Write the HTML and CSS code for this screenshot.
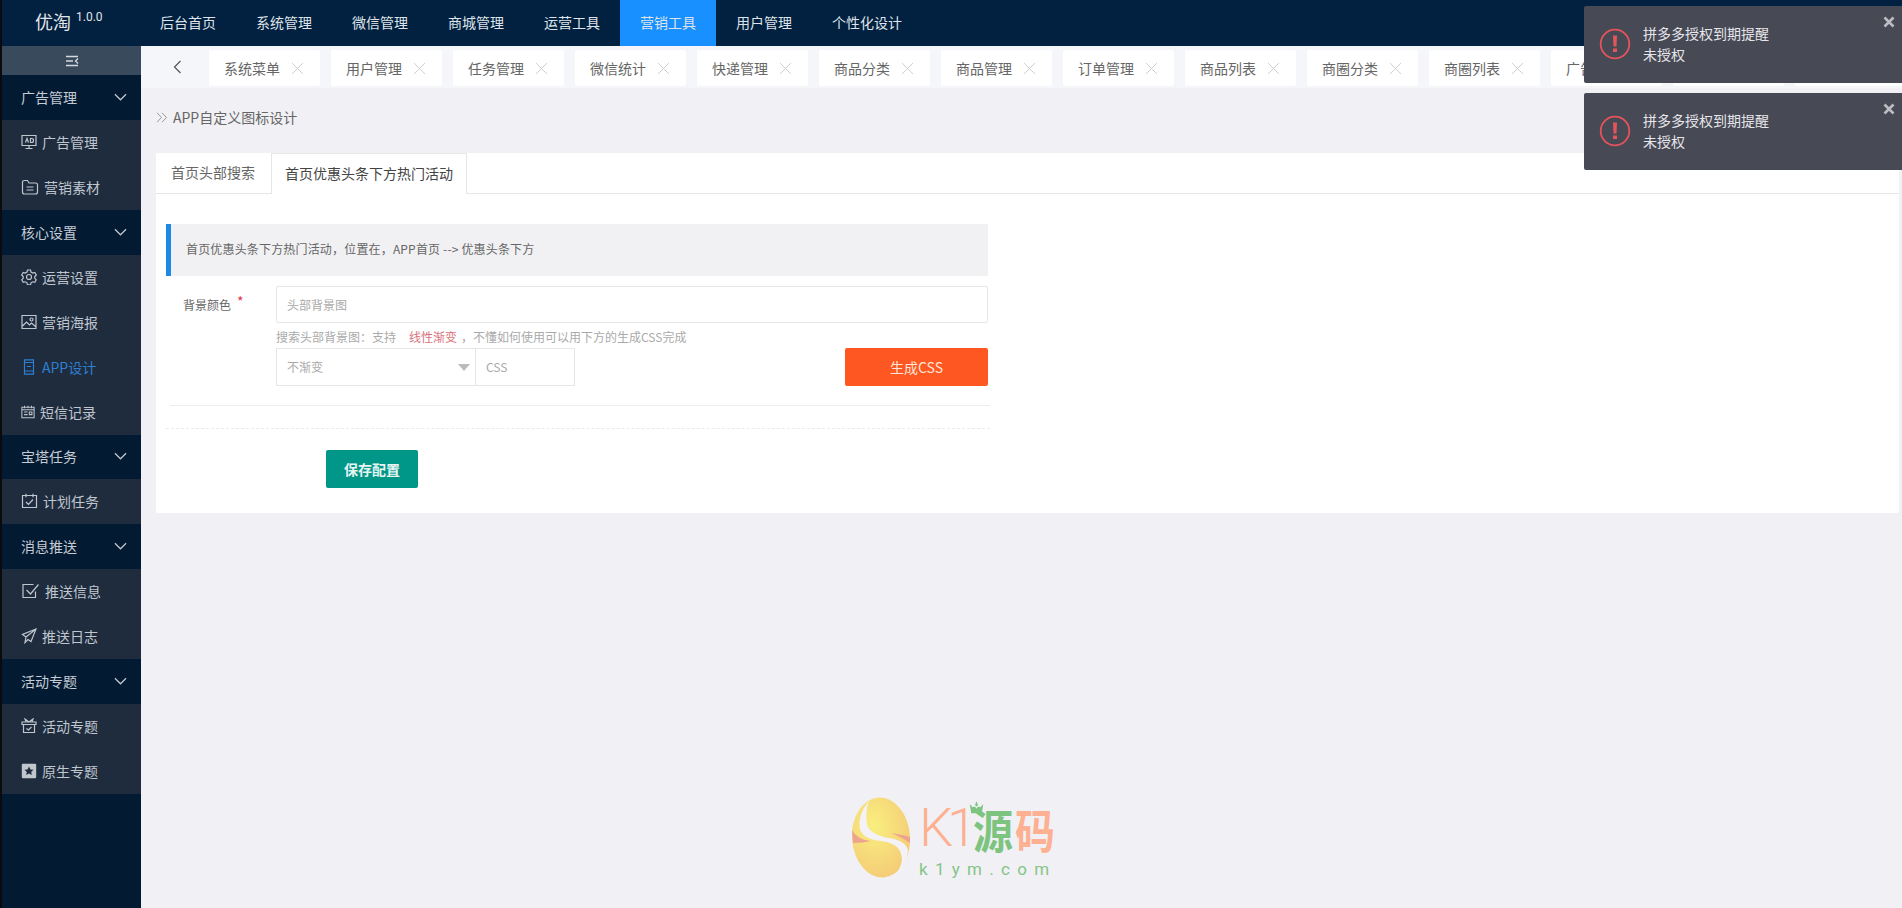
FILE: index.html
```html
<!DOCTYPE html>
<html lang="zh-CN">
<head>
<meta charset="utf-8">
<title>优淘</title>
<link rel="stylesheet" href="styles.css">
</head>
<body>
<div class="app">
  <header class="topbar">
    <div class="brand">优淘<sup>1.0.0</sup></div>
    <nav class="topnav">
      <a>后台首页</a><a>系统管理</a><a>微信管理</a><a>商城管理</a><a>运营工具</a><a class="on">营销工具</a><a>用户管理</a><a>个性化设计</a>
    </nav>
  </header>
  <div class="shell">
    <aside class="side">
      <div class="collapse"><svg width="14" height="12" viewBox="0 0 14 12"><path d="M1 1.500h12M1 6h7M1 10.500h12M13 3.500 10.500 6l2.500 2.500" fill="none" stroke="#d5dae0" stroke-width="1.300"/></svg></div>

      <div class="group">广告管理<svg class="chev" viewBox="0 0 14 8"><path d="M1 1l6 6 6-6"/></svg></div>
      <div class="item"><svg class="ic" viewBox="0 0 16 16"><path d="M1 1.500h14v10H1zM8 11.500v3M4.500 14.500h7M4.500 8.500 6 4.500l1.500 4M9.500 4.500v4h1.200q1.800 0 1.800-2t-1.800-2z"/></svg>广告管理</div>
      <div class="item"><svg class="ic w18" viewBox="0 0 18 16"><path d="M1.500 3v10q0 2 2 2h11q2 0 2-2V5.500q0-1.500-2-1.500H8L6.500 1.500h-3q-2 0-2 1.500zM5.500 8h7M5.500 11h7"/></svg>营销素材</div>

      <div class="group">核心设置<svg class="chev" viewBox="0 0 14 8"><path d="M1 1l6 6 6-6"/></svg></div>
      <div class="item"><svg class="ic" viewBox="0 0 16 16"><circle cx="8" cy="8" r="2.500"/><path d="M6.500 1h3l.5 2 1.800 1 2-.6 1.500 2.600-1.500 1.500v1.800l1.500 1.500-1.500 2.600-2-.6-1.800 1-.5 2h-3l-.5-2-1.800-1-2 .6L.7 10.800l1.500-1.500V7.500L.7 6l1.500-2.600 2 .6L6 3z"/></svg>运营设置</div>
      <div class="item"><svg class="ic" viewBox="0 0 16 16"><path d="M1 1.500h14v13H1zM1.500 12l4-4 3 3 2-2 4 3.500"/><circle cx="10.500" cy="5.500" r="1.500"/></svg>营销海报</div>
      <div class="item active"><svg class="ic" viewBox="0 0 16 16"><path d="M3.500 .8h9v14.400h-9zM3.500 3.500h9M3.500 12h9M6 7.500h4"/></svg>APP设计</div>
      <div class="item"><svg class="ic w14" viewBox="0 0 16 16"><path d="M1 2.500h14v12H1zM1 5.500h14M4 .8v3M8 .8v3M12 .8v3M3.500 8h4M3.500 11h4M9.500 8h3v3h-3z"/></svg>短信记录</div>

      <div class="group short">宝塔任务<svg class="chev" viewBox="0 0 14 8"><path d="M1 1l6 6 6-6"/></svg></div>
      <div class="item"><svg class="ic w17" viewBox="0 0 16 16"><path d="M1 2.500h14v12H1zM4.500 .8v3.400M11.500 .8v3.400M4.500 9l2.500 2.500 4.500-5"/></svg>计划任务</div>

      <div class="group">消息推送<svg class="chev" viewBox="0 0 14 8"><path d="M1 1l6 6 6-6"/></svg></div>
      <div class="item"><svg class="ic w19" viewBox="0 0 18 16"><path d="M14 8.500v6H1.500v-13H12M5 7l4 4 8-9.500"/></svg>推送信息</div>
      <div class="item"><svg class="ic" viewBox="0 0 16 16"><path d="M15 1 1.500 6.500 5 9l-1 5.500 3-3 3 2zM15 1 5 9"/></svg>推送日志</div>

      <div class="group">活动专题<svg class="chev" viewBox="0 0 14 8"><path d="M1 1l6 6 6-6"/></svg></div>
      <div class="item"><svg class="ic" viewBox="0 0 16 16"><path d="M1 4h14v2.500H1zM2.500 6.500v8h11v-8M5 4 4 1l4 3 4-3-1 3M5.500 10.500l2 1.500 3-3"/></svg>活动专题</div>
      <div class="item"><svg class="ic solid" viewBox="0 0 16 16"><path fill-rule="evenodd" d="M2 .8h12q1.200 0 1.200 1.200v12q0 1.200-1.200 1.200H2q-1.200 0-1.200-1.200V2Q.8.8 2 .8zM8 3.500l1.400 2.900 3.100.4-2.300 2.100.6 3.100L8 10.500l-2.800 1.500.6-3.100-2.300-2.100 3.100-.4z"/></svg>原生专题</div>
      <div class="side-fill"></div>
    </aside>

    <main class="main">
      <div class="tabbar">
        <div class="back"><svg width="9" height="14" viewBox="0 0 9 14"><path d="M7.500 1 1.500 7l6 6" fill="none" stroke="#555" stroke-width="1.200"/></svg></div>
        <div class="pagetabs">
          <span class="ptab">系统菜单<i></i></span>
          <span class="ptab">用户管理<i></i></span>
          <span class="ptab">任务管理<i></i></span>
          <span class="ptab">微信统计<i></i></span>
          <span class="ptab">快递管理<i></i></span>
          <span class="ptab">商品分类<i></i></span>
          <span class="ptab">商品管理<i></i></span>
          <span class="ptab">订单管理<i></i></span>
          <span class="ptab">商品列表<i></i></span>
          <span class="ptab">商圈分类<i></i></span>
          <span class="ptab">商圈列表<i></i></span>
          <span class="ptab">广告管理<i></i></span>
          <span class="ptab">营销素材<i></i></span>
          <span class="ptab">运营设置<i></i></span>
        </div>
      </div>

      <div class="crumb"><svg width="12" height="11" viewBox="0 0 12 11"><path d="M1 .8 5.500 5.500 1 10.200M6 .8l4.500 4.700L6 10.200" fill="none" stroke="#9a9a9a"/></svg>APP自定义图标设计</div>

      <section class="card">
        <div class="cardtabs">
          <span class="ctab">首页头部搜索</span>
          <span class="ctab on">首页优惠头条下方热门活动</span>
        </div>
        <div class="cardbody">
          <div class="notice">首页优惠头条下方热门活动，位置在，APP首页 --&gt; 优惠头条下方</div>
          <div class="row">
            <label class="lbl">背景颜色<em>*</em></label>
            <div class="field">头部背景图</div>
          </div>
          <div class="hint">搜索头部背景图：支持<b>线性渐变</b>，不懂如何使用可以用下方的生成CSS完成</div>
          <div class="row tools">
            <div class="select">不渐变<span class="caret"></span></div>
            <div class="css">CSS</div>
            <button class="gen">生成CSS</button>
          </div>
          <div class="rule"></div>
          <div class="rule dashed"></div>
          <button class="save">保存配置</button>
        </div>
      </section>
    </main>
  </div>

  <div class="toasts">
    <div class="toast">
      <svg class="alert" width="32" height="32" viewBox="0 0 32 32"><circle cx="16" cy="16" r="14.300" fill="none" stroke="#e5545b" stroke-width="1.800"/><path d="M14 7.500h4l-.5 11h-3zM14 20.500h4v3.600h-4z" fill="#e5545b"/></svg>
      <div class="msg"><div>拼多多授权到期提醒</div><div>未授权</div></div>
      <svg class="close" width="12" height="12" viewBox="0 0 12 12"><path d="M1.500 1.500l9 9M10.500 1.500l-9 9" stroke="#bcbcc2" stroke-width="2.600" fill="none"/></svg>
    </div>
    <div class="toast">
      <svg class="alert" width="32" height="32" viewBox="0 0 32 32"><circle cx="16" cy="16" r="14.300" fill="none" stroke="#e5545b" stroke-width="1.800"/><path d="M14 7.500h4l-.5 11h-3zM14 20.500h4v3.600h-4z" fill="#e5545b"/></svg>
      <div class="msg"><div>拼多多授权到期提醒</div><div>未授权</div></div>
      <svg class="close" width="12" height="12" viewBox="0 0 12 12"><path d="M1.500 1.500l9 9M10.500 1.500l-9 9" stroke="#bcbcc2" stroke-width="2.600" fill="none"/></svg>
    </div>
  </div>

  <div class="mark">
    <svg width="60" height="81" viewBox="0 0 60 81">
      <defs>
        <radialGradient id="egg" cx="40%" cy="35%" r="75%"><stop offset="0" stop-color="#f9ef7e"/><stop offset="1" stop-color="#f4c877"/></radialGradient>
      </defs>
      <ellipse cx="30" cy="40.500" rx="29" ry="40" fill="url(#egg)" transform="rotate(-4 30 40.500)"/>
      <path d="M1 33Q6 43 20 44Q12 46 2 46ZM40 36Q52 38 59 40L59 46Q52 41 40 36Z" fill="#eda38f"/>
      <path d="M18 4Q6 18 9 32Q12 42 30 44Q50 46 51 62Q50 72 43 79Q56 68 57 54Q56 44 38 41Q20 38 16 28Q14 14 18 4Z" fill="#f4f2f7"/>
    </svg>
    <div class="mark-text">
      <div class="mark-big"><span class="k1">K1</span><span class="yuan">源</span><span class="ma">码</span></div>
      <div class="mark-url">k1ym.com</div>
    </div>
    <svg class="crown" width="15" height="15" viewBox="0 0 20 17"><path d="M10 0l2 5-2 2-2-2zM1 4l4 4 3-1 2 3 2-3 3 1 4-4-2 12H3z" fill="#7cc47f"/></svg>
  </div>
</div>
</body>
</html>
```
FILE: styles.css
```css
* { box-sizing: border-box; }
html, body { margin: 0; height: 100%; }
body {
  font-family: "Noto Sans CJK SC", "Noto Sans", sans-serif;
  font-size: 14px;
  background: #f1f1f5;
  color: #555;
  overflow: hidden;
}
.app { position: relative; width: 1902px; height: 908px; overflow: hidden; display: flex; flex-direction: column; border-left: 2px solid #0a0a0f; }

/* top bar */
.topbar { display: flex; height: 46px; flex: none; background: #02203f; color: #dfe4ea; }
.brand { width: 138px; padding-left: 33px; font-size: 18px; line-height: 42px; color: #e2e6ea; white-space: nowrap; }
.brand sup { font-family: Roboto, sans-serif; font-size: 12px; margin-left: 5px; vertical-align: 8px; line-height: 0; }
.topnav { display: flex; }
.topnav a { padding: 0 20px; line-height: 44px; white-space: nowrap; }
.topnav a.on { background: #1890ff; }

.shell { flex: 1; display: flex; min-height: 0; }

/* sidebar */
.side { width: 139px; flex: none; display: flex; flex-direction: column; background: #1f2c3e; color: #bfc6ce; }
.collapse { height: 29px; flex: none; display: flex; align-items: center; justify-content: center; background: #3a4a5d; }
.group { height: 45px; flex: none; display: flex; align-items: center; justify-content: space-between; padding: 0 14px 2px 19px; background: #031a33; color: #c6ccd3; }
.group.short { height: 44px; }
.chev { width: 13px; height: 8px; fill: none; stroke: #c3c9d0; stroke-width: 1.300; }
.item { height: 45px; flex: none; display: flex; align-items: center; gap: 5px; padding: 0 0 2px 19px; }
.item.active { color: #2f7fd0; }
.ic { width: 16px; height: 16px; flex: none; fill: none; stroke: currentColor; stroke-width: 1.200; }
.ic.w14 { width: 14px; }
.ic.w17 { width: 17px; }
.ic.w18 { width: 18px; }
.ic.w19 { width: 19px; }
.ic.solid { fill: currentColor; stroke: none; }
.side-fill { flex: 1; background: #031a33; }

/* main */
.main { flex: 1; min-width: 0; display: flex; flex-direction: column; }
.tabbar { height: 42px; flex: none; display: flex; padding-top: 4px; background: #f5f6f9; }
.back { width: 68px; flex: none; height: 34px; display: flex; align-items: center; justify-content: center; padding-left: 5px; }
.pagetabs { display: flex; gap: 11px; overflow: hidden; flex: 1; }
.ptab { width: 111px; height: 36px; flex: none; display: flex; align-items: center; padding-left: 15px; gap: 12px; background: #fff; border-radius: 2px; color: #666; }
.ptab i {
  width: 11px;
  height: 11px;
  background:
    linear-gradient(45deg, transparent 46%, #cfcfcf 46%, #cfcfcf 54%, transparent 54%),
    linear-gradient(-45deg, transparent 46%, #cfcfcf 46%, #cfcfcf 54%, transparent 54%);
}

.crumb { height: 65px; flex: none; display: flex; align-items: center; gap: 5px; padding: 0 0 7px 15px; color: #666; }

/* card */
.card { height: 360px; margin: 0 3px 0 15px; flex: none; background: #fff; border-radius: 2px; }
.cardtabs { display: flex; height: 41px; border-bottom: 1px solid #e6e6e6; }
.ctab { height: 41px; padding: 0 15px; line-height: 38px; color: #666; }
.ctab.on { padding: 0 13px; margin-left: 1px; border: 1px solid #e6e6e6; border-bottom: 0; background: #fff; color: #444; }
.cardbody { width: 834px; padding: 30px 0 0 10px; }
.notice { width: 822px; height: 52px; line-height: 50px; padding-left: 15px; border-left: 5px solid #1e88e5; background: #f1f1f3; font-size: 12px; letter-spacing: .17px; color: #666; }
.row { display: flex; margin-top: 10px; }
.lbl { width: 110px; padding-left: 17px; font-size: 12px; line-height: 37px; color: #666; }
.lbl em { font-style: normal; color: #e5344a; font-size: 14px; margin-left: 6px; vertical-align: 3px; line-height: 0; }
.field { width: 712px; height: 37px; padding-left: 10px; border: 1px solid #e6e6e6; border-radius: 2px; font-size: 12px; line-height: 35px; color: #aaa; }
.hint { height: 25px; padding-left: 110px; font-size: 12px; line-height: 27px; color: #aaa; white-space: nowrap; }
.hint b { font-weight: 400; color: #d9737c; margin: 0 4px 0 13px; }
.tools { margin: 0 0 0 110px; height: 38px; width: 712px; }
.select { position: relative; width: 200px; height: 38px; padding-left: 10px; border: 1px solid #e6e6e6; font-size: 12px; line-height: 36px; color: #aaa; }
.caret { position: absolute; right: 5px; top: 15px; border: 6px solid transparent; border-top: 7px solid #bbb; border-bottom: 0; }
.css { width: 99px; height: 38px; padding-left: 10px; border: 1px solid #e6e6e6; border-left: 0; font-size: 12px; line-height: 36px; color: #aaa; }
.gen { width: 143px; height: 38px; margin-left: auto; border: 0; border-radius: 2px; background: #ff5722; color: #fde6d8; font: inherit; padding: 0; }
.rule { width: 820px; margin: 19px 0 0 4px; border-top: 1px solid #eee; }
.rule.dashed { width: 824px; margin: 22px 0 0; border-top: 1px dashed #eaeaea; }
.save { display: block; width: 92px; height: 38px; margin: 21px 0 0 160px; border: 0; border-radius: 2px; background: #009688; color: #e6f4f2; font: inherit; font-weight: 700; padding: 0; }

/* toasts */
.toasts { position: absolute; top: 6px; right: 0; width: 318px; display: flex; flex-direction: column; gap: 10px; }
.toast { position: relative; height: 77px; display: flex; align-items: center; padding: 0 0 1px 15px; gap: 12px; background: #474955; border-radius: 2px 0 0 2px; color: #e6e6ea; }
.alert { flex: none; }
.msg { line-height: 21px; margin-top: -1px; }
.close { position: absolute; right: 7px; top: 10px; }

/* watermark */
.mark { position: absolute; left: 849px; top: 797px; display: flex; gap: 8px; }
.mark-text { display: flex; flex-direction: column; }
.mark-big { display: flex; align-items: center; height: 62px; line-height: 1; }
.k1 { font-family: Roboto, sans-serif; font-weight: 300; font-size: 54px; letter-spacing: -6px; color: #fdb092; width: 54px; }
.yuan { font-size: 40px; font-weight: 700; color: #7cc47f; width: 42px; transform: scaleY(1.15); }
.ma { font-size: 40px; font-weight: 700; color: #fdb092; transform: scaleY(1.15); }
.mark-url { margin-top: 1px; font-family: Roboto, sans-serif; font-size: 17px; line-height: 18px; letter-spacing: 7.300px; color: #84c587; white-space: nowrap; }
.crown { position: absolute; left: 118px; top: 3px; }
```
